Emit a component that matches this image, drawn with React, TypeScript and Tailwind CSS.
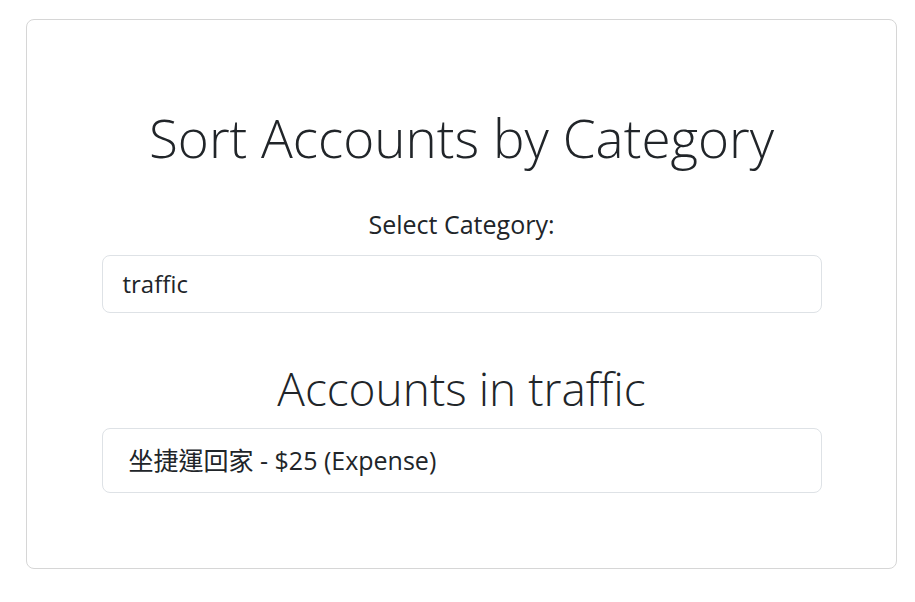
export default function App() {
  const accounts = [{ name: "坐捷運回家", amount: 25, type: "Expense" }];
  const category = "traffic";

  return (
    <div className="min-h-screen bg-white pt-[19px] pl-[26px] font-['Open_Sans','Noto_Sans_CJK_TC',sans-serif] text-[#212529]">
      <div className="w-[871px] h-[550px] border border-[#d6d6d6] rounded-[8px] flex flex-col items-center">
        <h1 className="mt-[86px] text-[53px] leading-[64px] font-light">
          Sort Accounts by Category
        </h1>
        <label className="mt-[39px] text-[25px] leading-[30px]">Select Category:</label>
        <div className="mt-[16px] w-[720px] h-[58px] border border-[#dee2e6] rounded-[8px] flex items-center px-[20px] text-[24px]">
          {category}
        </div>
        <h2 className="mt-[47px] text-[46px] leading-[56px] font-light">
          Accounts in {category}
        </h2>
        <ul className="mt-[12px] w-[720px]">
          {accounts.map((a) => (
            <li
              key={a.name}
              className="h-[65px] border border-[#dee2e6] rounded-[8px] flex items-center px-[26px] text-[25px]"
            >
              {a.name} - ${a.amount} ({a.type})
            </li>
          ))}
        </ul>
      </div>
    </div>
  );
}
